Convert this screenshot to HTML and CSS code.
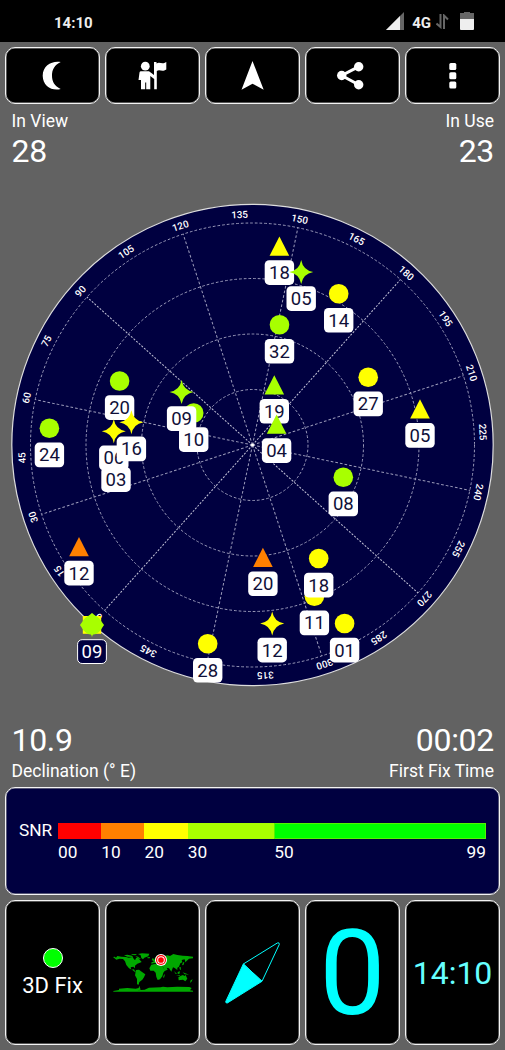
FILE: index.html
```html
<!DOCTYPE html>
<html lang="en">
<head>
<meta charset="utf-8">
<title>GPS Status</title>
<link rel="stylesheet" href="styles.css">
</head>
<body>
<header class="status">
  <span class="clock">14:10</span>
  <div class="status-icons">
    <svg class="signal" viewBox="0 0 18 18"><path d="M18 0V18H0Z" fill="#666"/><path d="M14 4V18H0Z" fill="#eee"/></svg>
    <span class="net">4G</span>
    <svg class="arrows" viewBox="0 0 13 15"><path d="M4.500 0V13L.5 9.500M8 15V1.500L12 5.500" fill="none" stroke="#666" stroke-width="2"/></svg>
    <svg class="battery" viewBox="0 0 14 18"><path d="M0 1H4V0H10V1H14V7H0Z" fill="#666"/><path d="M0 7H14V17Q14 18 13 18H1Q0 18 0 17Z" fill="#eee"/></svg>
  </div>
</header>

<nav class="row tools">
  <div class="tile"><svg viewBox="5 47 95 57"><path d="M60.700 62C52 60.500 42.700 65.500 42.700 75.700C42.700 86 52 91.300 60.700 89C54.500 86 52 81.500 52 75.700C52 69.500 54.500 65 60.700 62Z"/></svg></div>
  <div class="tile"><svg viewBox="105 47 95 57"><circle cx="145.300" cy="66.200" r="4.400"/><path d="M141 71.200H149L154 75V62H156.500V63.500C160 61.500 162 65 166.300 62V69.500C162 72.500 160 69 156.800 71V89.300H154.200V79L150.300 76V89.300H146.200V82.500H145.200V89.300H141V80H138.500L139.500 72.500Q139.700 71.200 141 71.200Z"/></svg></div>
  <div class="tile"><svg viewBox="205 47 95 57"><path d="M252.500 61L263.700 89.700L252.500 83.700L241.500 89.700Z"/></svg></div>
  <div class="tile"><svg viewBox="305 47 95 57"><path d="M358.700 66.700L341.700 75.500L358.700 84.700" fill="none" stroke="#fff" stroke-width="3"/><circle cx="358.700" cy="66.700" r="4.700"/><circle cx="341.700" cy="75.500" r="4.700"/><circle cx="358.700" cy="84.700" r="4.700"/></svg></div>
  <div class="tile"><svg viewBox="405 47 95 57"><rect x="449.300" y="63" width="7" height="7" rx="1.500"/><rect x="449.300" y="72.200" width="7" height="7" rx="1.500"/><rect x="449.300" y="81.500" width="7" height="7" rx="1.500"/></svg></div>
</nav>

<main class="sky">
  <div class="stats top">
    <div class="stat"><span class="label">In View</span><span class="value">28</span></div>
    <div class="stat end"><span class="label">In Use</span><span class="value">23</span></div>
  </div>

  <svg class="radar" viewBox="0 190 505 510">
    <defs>
      <rect id="tag" class="tag" x="-14.700" y="14.300" width="29.400" height="24.600" rx="4.500"/>
      <circle id="dot" r="9.800"/>
      <path id="tri" d="M0 -9.500L9.800 9.700H-9.800Z"/>
      <path id="star" d="M0 -12Q1.800 -1.800 12 0Q1.800 1.800 0 12Q-1.800 1.800 -12 0Q-1.800 -1.800 0 -12Z"/>
    </defs>
    <circle class="disc" cx="252.500" cy="445" r="240.700"/>
    <g class="grid" transform="translate(252.500 445)">
      <circle r="55.500"/><circle r="111"/><circle r="166.500"/><circle r="222"/>
      <path transform="rotate(-138.200)" class="axis" d="M0 0V-222"/>
      <path transform="rotate(-108.200)" d="M0 0V-222"/>
      <path transform="rotate(-78.200)" d="M0 0V-222"/>
      <path transform="rotate(-48.200)" class="axis" d="M0 0V-222"/>
      <path transform="rotate(-18.200)" d="M0 0V-222"/>
      <path transform="rotate(11.800)" d="M0 0V-222"/>
      <path transform="rotate(41.800)" class="axis" d="M0 0V-222"/>
      <path transform="rotate(71.800)" d="M0 0V-222"/>
      <path transform="rotate(101.800)" d="M0 0V-222"/>
      <path transform="rotate(131.800)" class="axis" d="M0 0V-222"/>
      <path transform="rotate(161.800)" d="M0 0V-222"/>
      <path transform="rotate(191.800)" d="M0 0V-222"/>
    </g>
    <circle cx="252.500" cy="445" r="1.500" fill="#fff"/>
    <g class="deg" transform="translate(252.500 445)">
      <text y="-227.300" transform="rotate(-138.200)">0</text>
      <text y="-227.300" transform="rotate(-123.200)">15</text>
      <text y="-227.300" transform="rotate(-108.200)">30</text>
      <text y="-227.300" transform="rotate(-93.200)">45</text>
      <text y="-227.300" transform="rotate(-78.200)">60</text>
      <text y="-227.300" transform="rotate(-63.200)">75</text>
      <text y="-227.300" transform="rotate(-48.200)">90</text>
      <text y="-227.300" transform="rotate(-33.200)">105</text>
      <text y="-227.300" transform="rotate(-18.200)">120</text>
      <text y="-227.300" transform="rotate(-3.200)">135</text>
      <text y="-227.300" transform="rotate(11.800)">150</text>
      <text y="-227.300" transform="rotate(26.800)">165</text>
      <text y="-227.300" transform="rotate(41.800)">180</text>
      <text y="-227.300" transform="rotate(56.800)">195</text>
      <text y="-227.300" transform="rotate(71.800)">210</text>
      <text y="-227.300" transform="rotate(86.800)">225</text>
      <text y="-227.300" transform="rotate(101.800)">240</text>
      <text y="-227.300" transform="rotate(116.800)">255</text>
      <text y="-227.300" transform="rotate(131.800)">270</text>
      <text y="-227.300" transform="rotate(146.800)">285</text>
      <text y="-227.300" transform="rotate(161.800)">300</text>
      <text y="-227.300" transform="rotate(176.800)">315</text>
      <text y="-227.300" transform="rotate(206.800)">345</text>
    </g>
    <g class="sats">
      <g class="fair" transform="translate(279.400 246)"><use href="#tri"/><use href="#tag"/><text y="33">18</text></g>
      <g class="good" transform="translate(301.200 272)"><use href="#star"/><use href="#tag"/><text y="33">05</text></g>
      <g class="fair" transform="translate(338.700 293.700)"><use href="#dot"/><use href="#tag"/><text y="33">14</text></g>
      <g class="good" transform="translate(279.500 324.700)"><use href="#dot"/><use href="#tag"/><text y="33">32</text></g>
      <g class="fair" transform="translate(368.200 377.300)"><use href="#dot"/><use href="#tag"/><text y="33">27</text></g>
      <g class="fair" transform="translate(420 408.800)"><use href="#tri"/><use href="#tag"/><text y="33">05</text></g>
      <g class="good" transform="translate(274.300 384.700)"><use href="#tri"/><use href="#tag"/><text y="33">19</text></g>
      <g class="good" transform="translate(276.600 424)"><use href="#tri"/><use href="#tag"/><text y="33">04</text></g>
      <g class="good" transform="translate(193.700 413)"><use href="#dot"/></g>
      <g class="good" transform="translate(181.600 392)"><use href="#star"/><use href="#tag"/><text y="33">09</text></g>
      <g transform="translate(193.700 413)"><use href="#tag"/><text y="33">10</text></g>
      <g class="good" transform="translate(119.600 381)"><use href="#dot"/><use href="#tag"/><text y="33">20</text></g>
      <g class="good" transform="translate(49.400 428.300)"><use href="#dot"/><use href="#tag"/><text y="33">24</text></g>
      <g class="fair" transform="translate(113.800 431.300)"><use href="#star"/><use href="#tag"/><text y="33">06</text></g>
      <g transform="translate(116 453)"><use href="#tag"/><text y="33">03</text></g>
      <g class="fair" transform="translate(131.400 422.300)"><use href="#star"/><use href="#tag"/><text y="33">16</text></g>
      <g class="good" transform="translate(343.300 477.300)"><use href="#dot"/><use href="#tag"/><text y="33">08</text></g>
      <g class="weak" transform="translate(79 546.500)"><use href="#tri"/><use href="#tag"/><text y="33">12</text></g>
      <g class="weak" transform="translate(262.900 557.200)"><use href="#tri"/><use href="#tag"/><text y="33">20</text></g>
      <g class="fair" transform="translate(314.400 596.300)"><use href="#dot"/><use href="#tag"/><text y="33">11</text></g>
      <g class="fair" transform="translate(318.700 558.500)"><use href="#dot"/><use href="#tag"/><text y="33">18</text></g>
      <g class="fair" transform="translate(272.200 623.500)"><use href="#star"/><use href="#tag"/><text y="33">12</text></g>
      <g class="fair" transform="translate(344.600 623.500)"><use href="#dot"/><use href="#tag"/><text y="33">01</text></g>
      <g class="fair" transform="translate(207.700 643.700)"><use href="#dot"/><use href="#tag"/><text y="33">28</text></g>
      <g class="good unused" transform="translate(92 625)"><rect x="-9.200" y="-9" width="18.400" height="17.800" fill="#ff0"/><use href="#dot"/><use href="#star"/><path d="M-12 0L-8 -5.500L0 -12L8 -5.500L12 0L8 6H-8Z"/><rect x="-14.400" y="14.700" width="28.800" height="23.800" rx="4.500"/><text y="33">09</text></g>
    </g>
  </svg>

  <div class="stats bottom">
    <div class="stat"><span class="value">10.9</span><span class="label">Declination (° E)</span></div>
    <div class="stat end"><span class="value">00:02</span><span class="label">First Fix Time</span></div>
  </div>
</main>

<section class="snr">
  <span class="snr-title">SNR</span>
  <div class="scale">
    <div class="seg s10"><i></i><span>00</span></div>
    <div class="seg s20"><i></i><span>10</span></div>
    <div class="seg s30"><i></i><span>20</span></div>
    <div class="seg s50"><i></i><span>30</span></div>
    <div class="seg s99"><i></i><div class="ends"><span>50</span><span>99</span></div></div>
  </div>
</section>

<footer class="row pages">
  <div class="tile fix"><span class="led"></span><span class="fix-text">3D Fix</span></div>
  <div class="tile">
    <svg class="map" viewBox="337 190 240 116">
      <g fill="#00a800">
        <path d="M337 202L342 201L346 204L350 199L362 201L376 202L384 204L396 202L399 207L403 212L406 206L410 203L415 208L423 217L416 220L410 222L403 228L403 236L398 231L390 233L392 240L400 239L404 246L410 245L404 248L395 241L385 236L377 226L373 215L367 208L357 207L347 210Z"/>
        <path d="M370 197L380 195L394 198L397 202L380 201ZM391 194L409 193L404 197L395 196ZM404 199L412 201L421 208L414 207ZM412 193L424 191L446 192L443 200L431 204L427 209L422 205L420 197ZM440 203L448 202L447 206L441 206Z"/>
        <path d="M406 241L415 240L423 246L434 254L430 263L425 270L416 277L414 285L409 284L409 268L403 257Z"/>
        <path d="M452 225L466 222L470 226L484 227L491 239L496 239L488 249L485 260L478 269L471 271L467 262L465 249L459 243L449 243L446 236ZM490 255L493 254L490 264L487 263Z"/>
        <path d="M452 222L453 217L459 216L456 210L461 210L463 205L470 197L480 196L487 201L500 197L508 199L518 193L530 196L546 198L560 199L577 201L577 206L565 207L554 218L552 209L543 211L545 218L539 221L535 231L530 234L530 241L522 235L517 233L512 246L505 236L498 234L501 240L493 243L486 230L475 222L466 220L458 221ZM456 205L460 208L458 213L453 212ZM547 218L551 218L549 225L544 227Z"/>
        <path d="M520 244L529 253L525 253ZM531 247L538 245L536 253L531 252ZM546 248L558 252L565 255L552 254ZM526 256L539 257L537 259ZM536 232L540 232L541 241L537 239ZM533 263L541 258L547 256L551 259L555 256L560 267L554 275L547 270L534 272ZM570 272L576 269L572 277L568 279Z"/>
        <path d="M338 304L355 301L355 297L380 295L405 297L414 295L416 288L420 300L410 302L432 300L445 294L480 293L487 291L500 293L530 291L566 292L573 295L568 302L577 303V306H338Z"/>
      </g>
      <circle cx="481" cy="211" r="18" fill="#fff"/><circle cx="481" cy="211" r="15" fill="red"/><circle cx="481" cy="211" r="11.500" fill="#fff"/><circle cx="481" cy="211" r="8.500" fill="red"/>
    </svg>
  </div>
  <div class="tile">
    <svg class="needle" viewBox="12 14 173 196"><path d="M70 86L126 138L22 203Q17 204 17 199Z" fill="#0ff" stroke="#0ff" stroke-width="3" stroke-linejoin="round"/><path d="M70 86L172 23Q178 20 178 27L126 138Z" fill="none" stroke="#0ff" stroke-width="3"/></svg>
  </div>
  <div class="tile speed">0</div>
  <div class="tile time">14:10</div>
</footer>
</body>
</html>
```
FILE: styles.css
```css
* { box-sizing: border-box; }

body {
  margin: 0;
  width: 505px;
  height: 1050px;
  overflow: hidden;
  background: #626262;
  color: #fff;
  font-family: Roboto, sans-serif;
}

svg, i { display: block; }

.status {
  height: 42px;
  margin-bottom: 5px;
  padding: 3px 31px 0 54px;
  display: flex;
  align-items: center;
  justify-content: space-between;
  background: #000;
  color: #eee;
  font-size: 15px;
  font-weight: 700;
}
.status-icons { display: flex; align-items: center; }
.signal { width: 18px; height: 18px; margin: -3px 8px 0 0; }
.arrows { width: 13px; height: 15px; margin: -2px 11px 0 5px; }
.battery { width: 14px; height: 18px; margin-top: -3px; }

.row {
  display: grid;
  grid-template-columns: repeat(5, 95px);
  gap: 5px;
  padding: 0 5px;
}
.tile {
  display: flex;
  align-items: center;
  justify-content: center;
  overflow: hidden;
  background: #000;
  border: 1px solid #f4f4f4;
  border-radius: 10px;
  box-shadow: inset 0 0 0 0.500px #aaa;
}
.tools { grid-auto-rows: 57px; }
.tools svg { flex: none; width: 95px; height: 57px; fill: #fff; }

.sky {
  height: 682.500px;
  padding-top: 5.500px;
  display: flex;
  flex-direction: column;
}
.stats {
  display: flex;
  justify-content: space-between;
  padding: 0 11px 0 11.500px;
}
.stat { display: flex; flex-direction: column; }
.end { align-items: flex-end; }
.label { font-size: 17.500px; line-height: 22px; }
.value { font-size: 32px; line-height: 38px; letter-spacing: -0.300px; }
.top { height: 80.500px; }
.bottom { padding-top: 20.500px; }
.bottom .label { margin-top: 1px; }
.radar { width: 505px; height: 510px; flex: none; }

.disc { fill: #000040; stroke: #ddd; stroke-width: 1.200; }
.grid { fill: none; stroke: #9b9bba; stroke-width: 1; stroke-dasharray: 2.700 2; }
.axis { stroke: #c4c4d8; stroke-dasharray: 2 1.500; }
.deg { fill: #fff; font-size: 9.800px; font-weight: 500; text-anchor: middle; }
.sats { font-size: 18.500px; text-anchor: middle; }
.sats text { fill: #101038; }
.tag { fill: #fff; }
.fair { fill: #ff0; }
.good { fill: #a8ff00; }
.weak { fill: #ff8000; }
.unused rect:last-of-type { fill: #000040; stroke: #fff; stroke-width: 1; }
.unused text { fill: #fff; }

.snr {
  height: 108px;
  margin: 0 5px 5px;
  padding: 35.500px 13px 0 13px;
  display: flex;
  background: #000040;
  border: 1px solid #f4f4f4;
  border-radius: 10px;
  box-shadow: inset 0 0 0 0.500px #aaa;
  font-size: 17.300px;
  line-height: 20px;
}
.snr-title { width: 39px; margin-top: -3px; }
.scale { flex: 1; display: flex; }
.seg { flex: 1 0 0; min-width: 0; }
.seg i { height: 16px; margin-bottom: 3px; }
.s50 { flex-grow: 2; }
.s99 { flex-grow: 4.900; }
.s10 i { background: #f00; }
.s20 i { background: #ff8000; }
.s30 i { background: #ff0; }
.s50 i { background: #a8ff00; }
.s99 i { background: #0f0; border: 1px solid #54f400; }
.ends { display: flex; justify-content: space-between; }

.pages { grid-auto-rows: 145.500px; }
.fix { flex-direction: column; padding-top: 4px; }
.led {
  width: 20px;
  height: 20px;
  margin-bottom: 4px;
  background: #0f0;
  border: 1px solid #fff;
  border-radius: 50%;
}
.fix-text { font-size: 22px; line-height: 28px; }
.map { width: 80px; height: 38.700px; }
.needle { width: 57.700px; height: 65.300px; }
.speed, .time { color: #0ff; }
.speed { padding-top: 4px; font-size: 118px; line-height: 136px; }
.time { padding-top: 1px; color: #6ff; font-size: 32px; }
```
